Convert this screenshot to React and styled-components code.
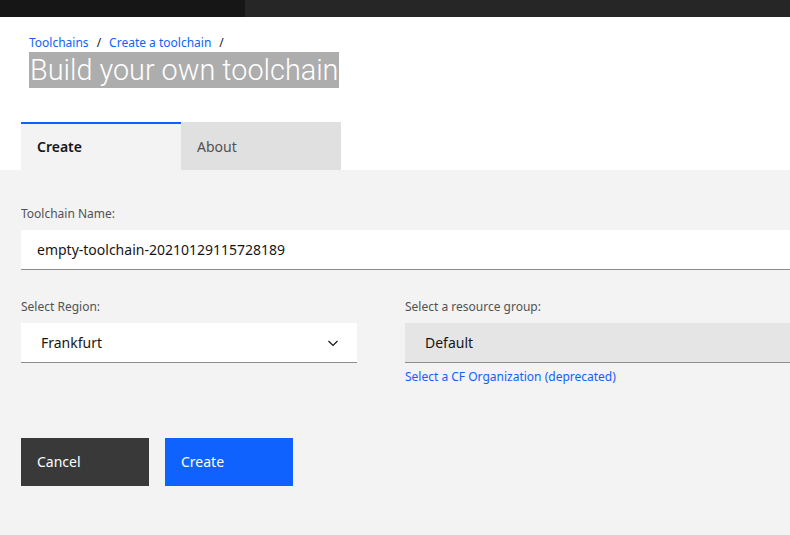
import React from 'react';
import styled, { createGlobalStyle } from 'styled-components';

const GlobalStyle = createGlobalStyle`
  html, body { margin: 0; padding: 0; background: #ffffff; overflow: hidden; }
  body { font-family: "Noto Sans", "Open Sans", sans-serif; }
  * { box-sizing: border-box; }
`;

/* ── top masthead ── */
const Masthead = styled.div`
  display: flex;
  height: 17px;
  background: #262626;
`;

const MastheadSide = styled.div`
  width: 245px;
  background: #161616;
`;

/* ── page header ── */
const Header = styled.div`
  padding: 18px 0 0 29px;
`;

const Crumbs = styled.div`
  display: flex;
  align-items: center;
  gap: 8px;
  font-size: 12px;
  line-height: 16px;
  color: #161616;
`;

const CrumbLink = styled.a`
  color: #0f62fe;
  text-decoration: none;
`;

const Title = styled.h1`
  display: inline-block;
  margin: 1px 0 0;
  padding: 0 1px;
  font-family: Roboto, "Noto Sans", sans-serif;
  font-weight: 300;
  font-size: 28.8px;
  line-height: 36px;
  color: #ffffff;
  background: #adadad;
`;

/* ── tabs ── */
const Tabs = styled.div`
  display: flex;
  margin: 34px 0 0 21px;
`;

const Tab = styled.div`
  width: 160px;
  height: 48px;
  display: flex;
  align-items: center;
  padding: 0 16px 2px;
  font-size: 14px;
  font-weight: ${p => (p.$active ? 600 : 400)};
  color: ${p => (p.$active ? '#161616' : '#525252')};
  background: ${p => (p.$active ? '#f3f3f3' : '#e0e0e0')};
  border-top: 2px solid ${p => (p.$active ? '#0f62fe' : 'transparent')};
`;

/* ── form panel ── */
const Panel = styled.div`
  background: #f3f3f3;
  padding: 36px 0 49px 21px;
  width: 1100px;
`;

const Field = styled.div`
  display: flex;
  flex-direction: column;
`;

const Label = styled.label`
  font-size: 12px;
  line-height: 16px;
  color: #525252;
  margin-bottom: 8px;
`;

const TextInput = styled.div`
  height: 40px;
  display: flex;
  align-items: center;
  padding: 0 16px;
  background: #ffffff;
  border-bottom: 1px solid #8d8d8d;
  font-size: 14px;
  color: #161616;
`;

const Row = styled.div`
  display: grid;
  grid-template-columns: 336px 1fr;
  column-gap: 48px;
  margin-top: 29px;
`;

const Select = styled.div`
  height: 40px;
  display: flex;
  align-items: center;
  justify-content: space-between;
  padding: 0 16px 0 20px;
  background: ${p => (p.$disabled ? '#e5e5e5' : '#ffffff')};
  border-bottom: 1px solid #8d8d8d;
  font-size: 14px;
  color: #161616;
`;

const HelperLink = styled.a`
  margin-top: 6px;
  font-size: 12px;
  line-height: 16px;
  color: #0f62fe;
  text-decoration: none;
`;

const Actions = styled.div`
  display: flex;
  gap: 16px;
  margin-top: 53px;
`;

const Button = styled.button`
  width: 128px;
  height: 48px;
  border: none;
  padding: 0 16px 2px;
  text-align: left;
  font-family: inherit;
  font-size: 14px;
  color: #ffffff;
  background: ${p => (p.$primary ? '#0f62fe' : '#393939')};
`;

const Chevron = () => (
  <svg width="16" height="16" viewBox="0 0 16 16" fill="none">
    <path d="M3.5 6l4.5 4.5L12.5 6" stroke="#161616" strokeWidth="1.2" />
  </svg>
);

export default function App() {
  return (
    <>
      <GlobalStyle />
      <Masthead><MastheadSide /></Masthead>

      <Header>
        <Crumbs>
          <CrumbLink href="#">Toolchains</CrumbLink>
          <span>/</span>
          <CrumbLink href="#">Create a toolchain</CrumbLink>
          <span>/</span>
        </Crumbs>
        <Title>Build your own toolchain</Title>
      </Header>

      <Tabs>
        <Tab $active>Create</Tab>
        <Tab>About</Tab>
      </Tabs>

      <Panel>
        <Field>
          <Label>Toolchain Name:</Label>
          <TextInput>empty-toolchain-20210129115728189</TextInput>
        </Field>

        <Row>
          <Field>
            <Label>Select Region:</Label>
            <Select>Frankfurt<Chevron /></Select>
          </Field>
          <Field>
            <Label>Select a resource group:</Label>
            <Select $disabled>Default</Select>
            <HelperLink href="#">Select a CF Organization (deprecated)</HelperLink>
          </Field>
        </Row>

        <Actions>
          <Button>Cancel</Button>
          <Button $primary>Create</Button>
        </Actions>
      </Panel>
    </>
  );
}
